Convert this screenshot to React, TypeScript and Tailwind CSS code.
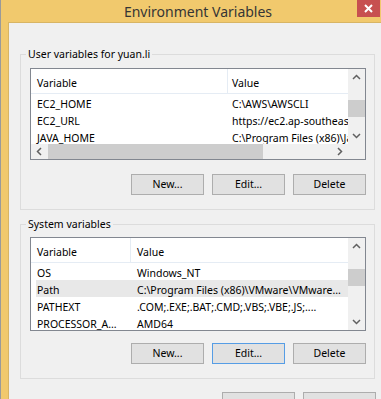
import React from 'react'

type Dir = 'up' | 'down' | 'left' | 'right'

const chevronPoints: Record<Dir, string> = {
  up: '1,6 4.5,2.5 8,6',
  down: '1,3 4.5,6.5 8,3',
  left: '6,1 2.5,4.5 6,8',
  right: '3,1 6.5,4.5 3,8',
}

function Chevron({ dir }: { dir: Dir }) {
  return (
    <svg width="9" height="9" viewBox="0 0 9 9">
      <polyline points={chevronPoints[dir]} fill="none" stroke="#606060" strokeWidth="1.5" />
    </svg>
  )
}

function VScroll() {
  return (
    <div className="w-[17px] shrink-0 flex flex-col bg-[#f0f0f0]">
      <div className="h-[17px] flex items-center justify-center"><Chevron dir="up" /></div>
      <div className="flex-1">
        <div className="mt-[14px] h-[17px] bg-[#cdcdcd]" />
      </div>
      <div className="h-[17px] flex items-center justify-center"><Chevron dir="down" /></div>
    </div>
  )
}

function Button({ label, focused, tall }: { label: string; focused?: boolean; tall?: boolean }) {
  return (
    <div
      className={
        'w-[73px] shrink-0 flex items-center justify-center bg-[#e1e1e1] border text-[10.5px] text-black ' +
        (tall ? 'h-[26px] ' : 'h-[21px] ') +
        (focused ? 'border-[#569de5]' : 'border-[#adadad]')
      }
    >
      {label}
    </div>
  )
}

const userVars = [
  ['EC2_HOME', 'C:\\AWS\\AWSCLI'],
  ['EC2_URL', 'https://ec2.ap-southeast-1.amazonaws.com'],
  ['JAVA_HOME', 'C:\\Program Files (x86)\\Java\\jdk1.7.0_45'],
]

const systemVars = [
  ['OS', 'Windows_NT'],
  ['Path', 'C:\\Program Files (x86)\\VMware\\VMware...'],
  ['PATHEXT', '.COM;.EXE;.BAT;.CMD;.VBS;.VBE;.JS;....'],
  ['PROCESSOR_A...', 'AMD64'],
]

export default function App() {
  return (
    <div className="w-[381px] h-[399px] overflow-hidden flex flex-col bg-[#f1c96d] border-l border-[#9a9a9a] font-['Noto_Sans',sans-serif] text-black">
      {/* Title bar */}
      <div className="h-[25px] flex items-start">
        <div className="flex-1 pl-[38px] text-center text-[14px] leading-[20px] pt-[2px] text-[#353535]">
          Environment Variables
        </div>
        <div className="w-[23px] h-[17px] mr-[1px] bg-[#c75050] flex items-center justify-center">
          <svg width="9" height="9" viewBox="0 0 9 9">
            <path d="M1 1 L8 8 M8 1 L1 8" stroke="#fff" strokeWidth="2" />
          </svg>
        </div>
      </div>

      <div className="flex-1 flex pl-[7px]">
        <div className="flex-1 min-w-0 bg-[#f0f0f0] border-l border-t border-[#d8b564] pl-[11px] pr-[6px] flex flex-col">
          {/* User variables */}
          <fieldset className="min-w-0 mt-[23px] border border-[#dcdcdc] pl-[9px] pr-[8px] pt-[6px] pb-[14px]">
            <legend className="-ml-[4px] px-[2px] text-[10.5px] leading-[16px]">User variables for yuan.li</legend>
            <div className="h-[92px] border border-[#828790] bg-white flex flex-col text-[10.5px]">
              <div className="h-[75px] flex">
                <div className="flex-1 min-w-0 flex flex-col overflow-hidden">
                  <div className="h-[25px] flex border-b border-[#e5ecf4] shrink-0 leading-[16px]">
                    <div className="w-[197px] shrink-0 border-r border-[#e5ecf4] pl-[6px] pt-[6px]">Variable</div>
                    <div className="pl-[4px] pt-[6px]">Value</div>
                  </div>
                  {userVars.map(([name, value]) => (
                    <div key={name} className="h-[17px] shrink-0 flex ml-[5px] pt-[2px] leading-[17px] whitespace-nowrap">
                      <div className="w-[191px] pl-[1px] shrink-0">{name}</div>
                      <div className="pl-[5px]">{value}</div>
                    </div>
                  ))}
                </div>
                <VScroll />
              </div>
              <div className="h-[15px] flex bg-[#f0f0f0]">
                <div className="w-[17px] flex items-center justify-center"><Chevron dir="left" /></div>
                <div className="w-[215px] bg-[#cdcdcd]" />
                <div className="flex-1" />
                <div className="w-[17px] flex items-center justify-center"><Chevron dir="right" /></div>
                <div className="w-[17px]" />
              </div>
            </div>
            <div className="mt-[14px] flex justify-end gap-[8px]">
              <Button label="New..." />
              <Button label="Edit..." />
              <Button label="Delete" />
            </div>
          </fieldset>

          {/* System variables */}
          <fieldset className="min-w-0 mt-[6px] border border-[#dcdcdc] pl-[9px] pr-[8px] pt-[5px] pb-[14px]">
            <legend className="-ml-[4px] px-[2px] text-[10.5px] leading-[16px]">System variables</legend>
            <div className="h-[94px] border border-[#828790] bg-white flex text-[10.5px]">
              <div className="flex-1 min-w-0 flex flex-col overflow-hidden">
                <div className="h-[25px] flex border-b border-[#e5ecf4] shrink-0 leading-[16px]">
                  <div className="w-[100px] shrink-0 border-r border-[#e5ecf4] pl-[6px] pt-[6px]">Variable</div>
                  <div className="pl-[6px] pt-[6px]">Value</div>
                </div>
                {systemVars.map(([name, value]) => (
                  <div
                    key={name}
                    className={
                      'h-[17px] shrink-0 flex ml-[5px] leading-[17px] whitespace-nowrap ' +
                      (name === 'Path' ? 'bg-[#e8e8e8]' : '')
                    }
                  >
                    <div className="w-[94px] pl-[1px] pt-[2px] shrink-0 overflow-hidden">{name}</div>
                    <div className="pl-[7px] pt-[2px]">{value}</div>
                  </div>
                ))}
              </div>
              <VScroll />
            </div>
            <div className="mt-[12px] flex justify-end gap-[8px]">
              <Button label="New..." />
              <Button label="Edit..." focused />
              <Button label="Delete" />
            </div>
          </fieldset>

          {/* OK / Cancel */}
          <div className="mt-[13px] mr-[-1px] flex justify-end gap-[8px]">
            <Button label="OK" tall />
            <Button label="Cancel" tall />
          </div>
        </div>
      </div>
    </div>
  )
}
